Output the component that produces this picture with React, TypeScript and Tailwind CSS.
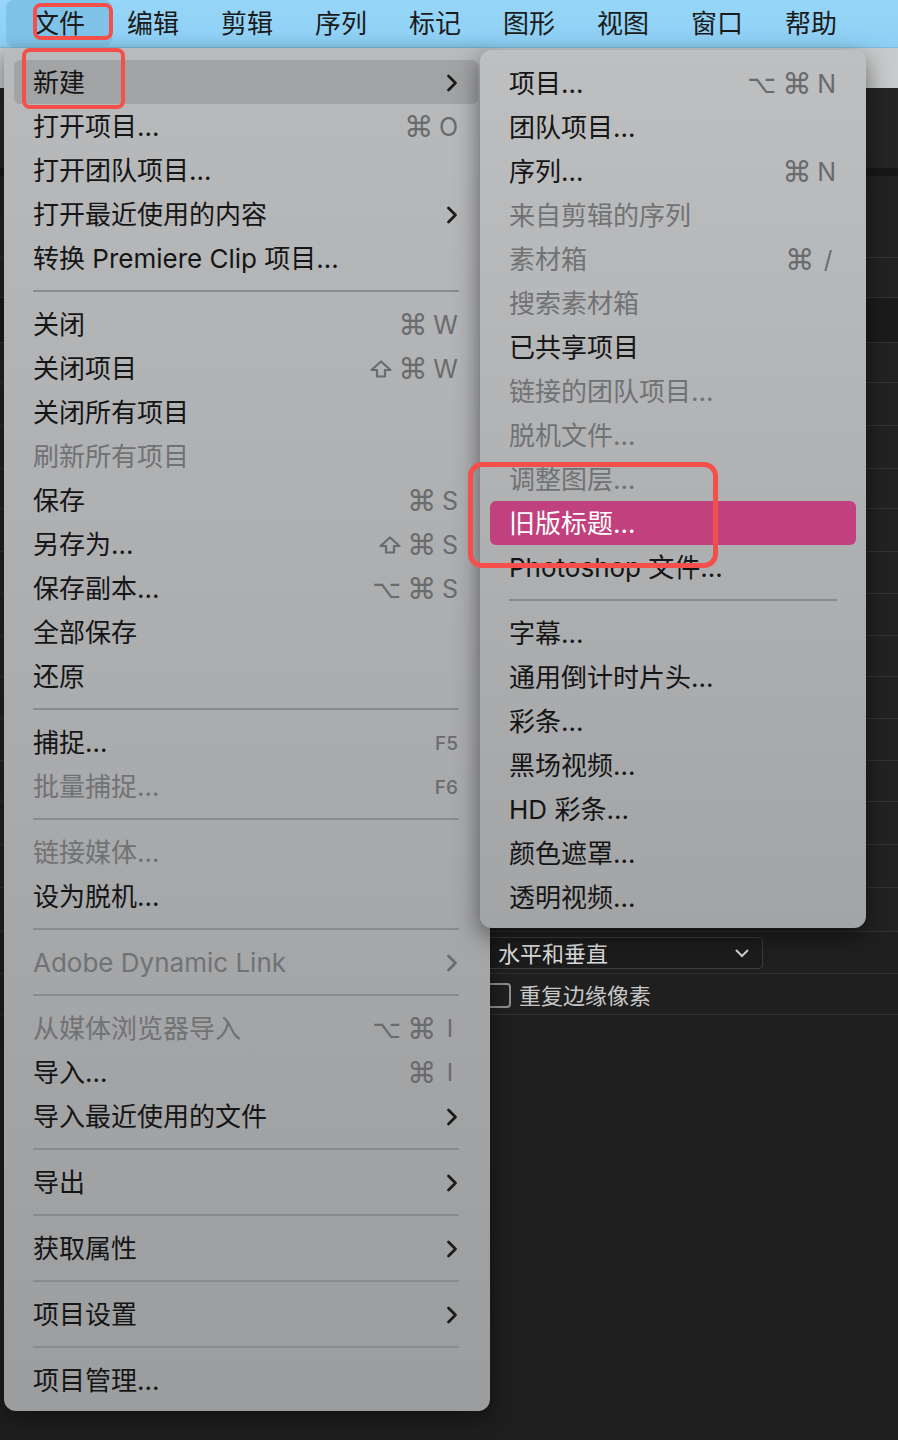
import React from "react";

type Row =
  | "sep"
  | {
      label: string;
      disabled?: boolean;
      sc?: string[];
      sub?: boolean;
      hl?: "gray" | "pink";
      small?: boolean;
    };

const mainItems: Row[] = [
  { label: "新建", sub: true, hl: "gray" },
  { label: "打开项目...", sc: ["⌘", "O"] },
  { label: "打开团队项目..." },
  { label: "打开最近使用的内容", sub: true },
  { label: "转换 Premiere Clip 项目..." },
  "sep",
  { label: "关闭", sc: ["⌘", "W"] },
  { label: "关闭项目", sc: ["⇧", "⌘", "W"] },
  { label: "关闭所有项目" },
  { label: "刷新所有项目", disabled: true },
  { label: "保存", sc: ["⌘", "S"] },
  { label: "另存为...", sc: ["⇧", "⌘", "S"] },
  { label: "保存副本...", sc: ["⌥", "⌘", "S"] },
  { label: "全部保存" },
  { label: "还原" },
  "sep",
  { label: "捕捉...", sc: ["F5"], small: true },
  { label: "批量捕捉...", sc: ["F6"], small: true, disabled: true },
  "sep",
  { label: "链接媒体...", disabled: true },
  { label: "设为脱机..." },
  "sep",
  { label: "Adobe Dynamic Link", disabled: true, sub: true },
  "sep",
  { label: "从媒体浏览器导入", disabled: true, sc: ["⌥", "⌘", "I"] },
  { label: "导入...", sc: ["⌘", "I"] },
  { label: "导入最近使用的文件", sub: true },
  "sep",
  { label: "导出", sub: true },
  "sep",
  { label: "获取属性", sub: true },
  "sep",
  { label: "项目设置", sub: true },
  "sep",
  { label: "项目管理..." },
];

const subItems: Row[] = [
  { label: "项目...", sc: ["⌥", "⌘", "N"] },
  { label: "团队项目..." },
  { label: "序列...", sc: ["⌘", "N"] },
  { label: "来自剪辑的序列", disabled: true },
  { label: "素材箱", disabled: true, sc: ["⌘", "/"] },
  { label: "搜索素材箱", disabled: true },
  { label: "已共享项目" },
  { label: "链接的团队项目...", disabled: true },
  { label: "脱机文件...", disabled: true },
  { label: "调整图层...", disabled: true },
  { label: "旧版标题...", hl: "pink" },
  { label: "Photoshop 文件..." },
  "sep",
  { label: "字幕..." },
  { label: "通用倒计时片头..." },
  { label: "彩条..." },
  { label: "黑场视频..." },
  { label: "HD 彩条..." },
  { label: "颜色遮罩..." },
  { label: "透明视频..." },
];

function Chevron({ color }: { color: string }) {
  return (
    <svg width="12" height="18" viewBox="0 0 12 18" className="shrink-0 mt-[2px]">
      <path d="M2.5 2 L9.5 9 L2.5 16" fill="none" stroke={color} strokeWidth="2.8" strokeLinecap="round" strokeLinejoin="round" />
    </svg>
  );
}

function ShiftIcon() {
  return (
    <svg width="22" height="18" viewBox="0 0 22 18" className="shrink-0">
      <path d="M11 1.5 L20.5 10 L15 10 L15 16.5 L7 16.5 L7 10 L1.5 10 Z" fill="none" stroke="#6a6b6d" strokeWidth="2.2" strokeLinejoin="round" />
    </svg>
  );
}

function Shortcut({ keys, small }: { keys: string[]; small?: boolean }) {
  return (
    <div className="flex items-center gap-[6px] text-[#6a6b6d] mt-[2px]">
      {keys.map((k, i) => {
        if (k === "⇧") return <ShiftIcon key={i} />;
        if (k === "⌘" || k === "⌥")
          return (
            <span key={i} className={`font-['DejaVu_Sans',sans-serif] leading-none ${k === "⌥" ? "text-[25px]" : "text-[29px]"}`}>
              {k}
            </span>
          );
        return (
          <span
            key={i}
            className={
              small
                ? "text-[19px] leading-none font-medium"
                : k === "I" || k === "/"
                ? "text-[24px] leading-none w-[16px] text-center"
                : "text-[25px] leading-none"
            }
          >
            {k}
          </span>
        );
      })}
    </div>
  );
}

function Menu({ items }: { items: Row[] }) {
  return (
    <>
      {items.map((it, i) => {
        if (it === "sep")
          return (
            <div key={i} className="h-[22px] flex items-center px-[19px]">
              <div className="h-[2px] w-full bg-[#8a8b8d]" />
            </div>
          );
        const bg =
          it.hl === "gray" ? "bg-[#a2a3a5]" : it.hl === "pink" ? "bg-[#c0417d]" : "";
        const color = it.hl === "pink" ? "text-white" : it.disabled ? "text-[#717274]" : "text-[#151515]";
        return (
          <div key={i} className={`h-[44px] flex items-center justify-between pl-[19px] pr-[20px] rounded-[6px] ${bg}`}>
            <span className={`text-[26px] leading-none whitespace-nowrap mt-[2px] ${color}`}>{it.label}</span>
            {it.sc && <Shortcut keys={it.sc} small={it.small} />}
            {it.sub && <Chevron color={it.disabled ? "#6c6d6f" : "#1c1c1c"} />}
          </div>
        );
      })}
    </>
  );
}

const bgRows: { h: number; cls: string }[] = [
  { h: 80, cls: "bg-[#252525]" },
  { h: 8, cls: "bg-[#181818]" },
  { h: 82, cls: "bg-[#222222] border-b border-[#333333]" },
  { h: 40, cls: "bg-[#222222] border-b border-[#333333]" },
  { h: 45, cls: "bg-[#1b1b1b] border-b border-[#333333]" },
  { h: 40, cls: "bg-[#222222] border-b border-[#333333]" },
  { h: 43, cls: "bg-[#222222] border-b border-[#333333]" },
  { h: 43, cls: "bg-[#222222] border-b border-[#333333]" },
  { h: 40, cls: "bg-[#222222] border-b border-[#333333]" },
  { h: 43, cls: "bg-[#222222] border-b border-[#333333]" },
  { h: 42, cls: "bg-[#222222] border-b border-[#333333]" },
  { h: 42, cls: "bg-[#222222] border-b border-[#333333]" },
  { h: 41, cls: "bg-[#222222] border-b border-[#333333]" },
  { h: 42, cls: "bg-[#222222] border-b border-[#333333]" },
  { h: 42, cls: "bg-[#222222] border-b border-[#333333]" },
  { h: 41, cls: "bg-[#222222] border-b border-[#333333]" },
  { h: 43, cls: "bg-[#222222] border-b border-[#333333]" },
  { h: 43, cls: "bg-[#222222] border-b border-[#333333]" },
  { h: 44, cls: "bg-[#222222] border-b border-[#333333]" },
];

export default function App() {
  const menuBar = ["文件", "编辑", "剪辑", "序列", "标记", "图形", "视图", "窗口", "帮助"];
  return (
    <div className="relative w-[898px] h-[1440px] overflow-hidden bg-[#1e1e1e] font-[Inter,'Noto_Sans_CJK_SC',sans-serif]">
      {/* menu bar */}
      <div className="relative h-[48px] bg-gradient-to-b from-[#97d6f8] to-[#8dcff4] border-b border-[#7fb9d8] flex items-center pl-[33px] gap-[42px]">
        <div className="absolute left-[6px] top-0 w-[106px] h-[47px] rounded-[8px] bg-[#80c3e8]" />
        {menuBar.map((m) => (
          <span key={m} className="relative text-[26px] leading-none text-[#1b1b1b] w-[52px] whitespace-nowrap mt-[1px]">
            {m}
          </span>
        ))}
      </div>

      {/* background app */}
      <div className="flex flex-col">
        <div className="h-[40px] bg-[#c9cacb]" />
        {bgRows.map((r, i) => (
          <div key={i} style={{ height: r.h }} className={r.cls} />
        ))}
        <div className="h-[42px] bg-[#1f1f1f] border-b border-[#303030] flex items-center pl-[484px]">
          <div className="w-[279px] h-[32px] rounded-[4px] border border-[#3c3c3c] bg-[#1c1c1c] flex items-center justify-between pl-[13px] pr-[12px]">
            <span className="text-[22px] leading-none text-[#dcdcdc] mt-[2px]">水平和垂直</span>
            <svg width="16" height="10" viewBox="0 0 16 10">
              <path d="M2 2 L8 8 L14 2" fill="none" stroke="#d0d0d0" strokeWidth="2" />
            </svg>
          </div>
        </div>
        <div className="h-[41px] bg-[#1f1f1f] border-b border-[#303030] flex items-center pl-[486px] gap-[8px]">
          <div className="w-[25px] h-[25px] rounded-[4px] border-[2px] border-[#8d8d8d] mt-[2px]" />
          <span className="text-[22px] leading-none text-[#c8c8c8] mt-[4px]">重复边缘像素</span>
        </div>
      </div>

      {/* main File menu */}
      <div className="absolute left-[4px] top-[48px] w-[486px] rounded-b-[12px] rounded-t-[6px] bg-gradient-to-b from-[#b9babc] to-[#9c9d9f] pt-[12px] pb-[9px] pl-[10px] pr-[12px] shadow-[0_6px_20px_rgba(0,0,0,0.45)]">
        <Menu items={mainItems} />
      </div>

      {/* New submenu */}
      <div className="absolute left-[480px] top-[50px] w-[386px] rounded-[12px] bg-gradient-to-b from-[#bebfc1] to-[#a3a4a6] pt-[11px] pb-[9px] px-[10px] shadow-[0_8px_24px_rgba(0,0,0,0.5)]">
        <Menu items={subItems} />
      </div>

      {/* red annotations */}
      <div className="absolute left-[33px] top-[3px] w-[80px] h-[37px] rounded-[8px] border-[4px] border-[#f44f4a]" />
      <div className="absolute left-[22px] top-[48px] w-[103px] h-[61px] rounded-[8px] border-[4px] border-[#f44f4a]" />
      <div className="absolute left-[468px] top-[462px] w-[250px] h-[106px] rounded-[14px] border-[5px] border-[#f44f4a]" />
    </div>
  );
}
